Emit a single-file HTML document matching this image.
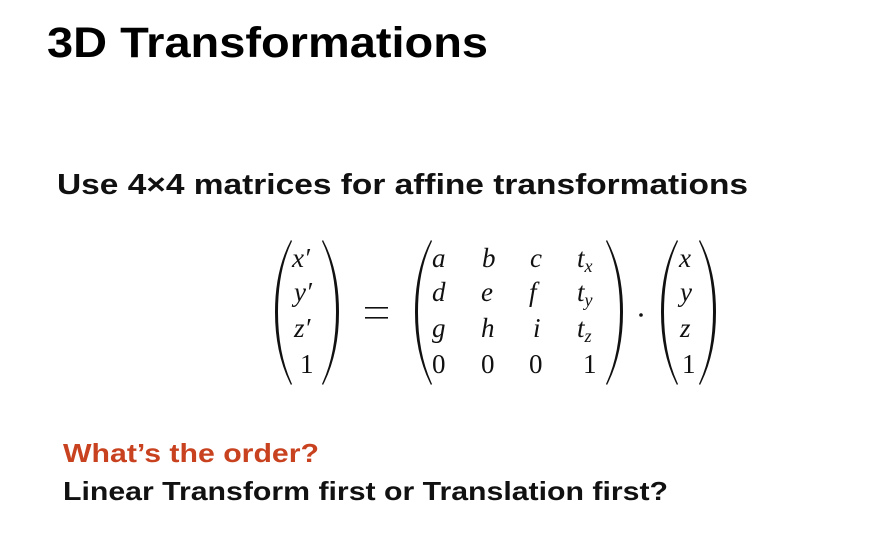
<!DOCTYPE html>
<html><head><meta charset="utf-8"><style>
html,body{margin:0;padding:0;background:#fff;width:881px;height:553px;overflow:hidden}
svg{display:block}
.m{font-family:"Liberation Serif",serif;font-size:27px;fill:#111}
.i{font-style:italic}
</style></head><body>
<svg width="881" height="553" viewBox="0 0 881 553">
<rect width="881" height="553" fill="#fff"/>
<text x="47" y="57" font-family="Liberation Sans,sans-serif" font-weight="bold" font-size="43" fill="#000" textLength="441" lengthAdjust="spacingAndGlyphs">3D Transformations</text>
<text x="57" y="194" font-family="Liberation Sans,sans-serif" font-weight="bold" font-size="29" fill="#111" textLength="691" lengthAdjust="spacingAndGlyphs">Use 4×4 matrices for affine transformations</text>
<text x="63" y="462" font-family="Liberation Sans,sans-serif" font-weight="bold" font-size="26" fill="#c8421f" textLength="256" lengthAdjust="spacingAndGlyphs">What’s the order?</text>
<text x="63" y="500" font-family="Liberation Sans,sans-serif" font-weight="bold" font-size="26" fill="#111" textLength="605" lengthAdjust="spacingAndGlyphs">Linear Transform first or Translation first?</text>

<g fill="#111">
<path d="M291 240 Q275 270 275 312 Q275 354 291 385 L292 384 Q278 354 278 312 Q278 270 292 241 Z"/>
<path d="M323 240 Q339 270 339 312 Q339 354 323 385 L322 384 Q336 354 336 312 Q336 270 322 241 Z"/>
<path d="M431 240 Q415 270 415 312 Q415 354 431 385 L432 384 Q418 354 418 312 Q418 270 432 241 Z"/>
<path d="M607 240 Q623 270 623 312 Q623 354 607 385 L606 384 Q620 354 620 312 Q620 270 606 241 Z"/>
<path d="M677 240 Q661 270 661 312 Q661 354 677 385 L678 384 Q664 354 664 312 Q664 270 678 241 Z"/>
<path d="M700 240 Q716 270 716 312 Q716 354 700 385 L699 384 Q713 354 713 312 Q713 270 699 241 Z"/>
<rect x="365" y="307" width="23" height="1.6"/>
<rect x="365" y="317" width="23" height="1.6"/>
<circle cx="641" cy="315" r="1.8"/>
</g>

<g class="m">
<text x="292" y="267" class="i">x′</text>
<text x="294" y="301" class="i">y′</text>
<text x="294" y="337" class="i">z′</text>
<text x="300" y="373">1</text>

<text x="432" y="267" class="i">a</text>
<text x="482" y="267" class="i">b</text>
<text x="530" y="267" class="i">c</text>
<text x="577" y="267" class="i">t<tspan font-size="18" dy="5">x</tspan></text>
<text x="432" y="301" class="i">d</text>
<text x="481" y="301" class="i">e</text>
<text x="529" y="301" class="i">f</text>
<text x="577" y="301" class="i">t<tspan font-size="18" dy="5">y</tspan></text>
<text x="432" y="337" class="i">g</text>
<text x="481" y="337" class="i">h</text>
<text x="533" y="337" class="i">i</text>
<text x="577" y="337" class="i">t<tspan font-size="18" dy="5">z</tspan></text>
<text x="432" y="373">0</text>
<text x="481" y="373">0</text>
<text x="529" y="373">0</text>
<text x="583" y="373">1</text>

<text x="679" y="267" class="i">x</text>
<text x="680" y="301" class="i">y</text>
<text x="680" y="337" class="i">z</text>
<text x="682" y="373">1</text>
</g>
</svg>
</body></html>
